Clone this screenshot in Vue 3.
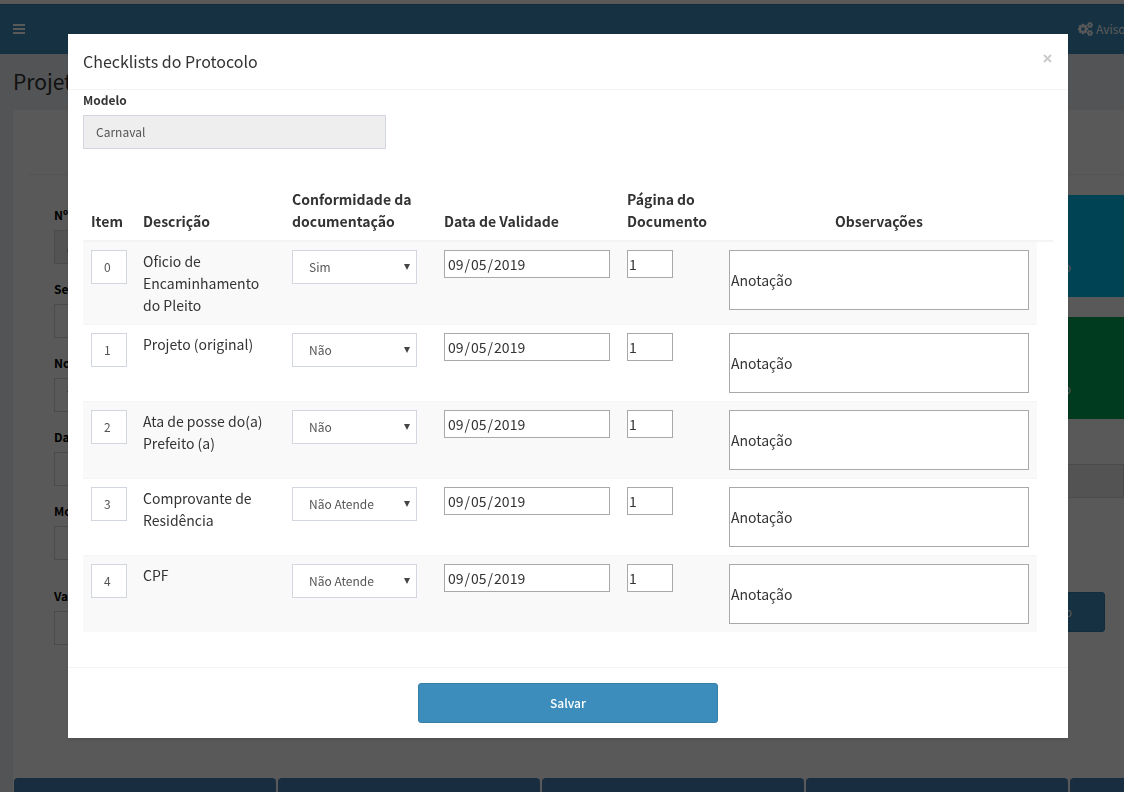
<script setup>
import { reactive } from 'vue'

const sideFields = [
  { id: 'numero', label: 'Nº', value: 'A', disabled: true },
  { id: 'setor', label: 'Se', value: '' },
  { id: 'nome', label: 'No', value: 'T' },
  { id: 'data', label: 'Da', value: '' },
  { id: 'modalidade', label: 'Mo', value: '' },
  { id: 'valor', label: 'Va', value: '', spaced: true },
]

const options = ['Sim', 'Não', 'Não Atende']

const rows = reactive([
  { item: '0', text: 'Oficio de Encaminhamento do Pleito', status: 'Sim', date: '2019-09-05', page: '1', note: 'Anotação' },
  { item: '1', text: 'Projeto (original)', status: 'Não', date: '2019-09-05', page: '1', note: 'Anotação' },
  { item: '2', text: 'Ata de posse do(a) Prefeito (a)', status: 'Não', date: '2019-09-05', page: '1', note: 'Anotação' },
  { item: '3', text: 'Comprovante de Residência', status: 'Não Atende', date: '2019-09-05', page: '1', note: 'Anotação' },
  { item: '4', text: 'CPF', status: 'Não Atende', date: '2019-09-05', page: '1', note: 'Anotação' },
])
</script>

<template>
  <div class="page">
    <header class="topbar">
      <button class="menu" type="button" aria-label="Menu">
        <svg width="12" height="10" viewBox="0 0 12 10"><path d="M0 0h12v2H0zM0 4h12v2H0zM0 8h12v2H0z" fill="currentColor" /></svg>
      </button>
      <a class="notices" href="#">
        <svg class="cogs" viewBox="0 0 1920 1792">
          <path fill="currentColor" stroke="currentColor" stroke-width="60" d="M896 896q0-106-75-181t-181-75-181 75-75 181 75 181 181 75 181-75 75-181zm768 512q0-52-38-90t-90-38-90 38-38 90q0 53 37.5 90.5t90.5 37.5 90.5-37.5 37.5-90.5zm0-1024q0-52-38-90t-90-38-90 38-38 90q0 53 37.5 90.5t90.5 37.5 90.5-37.5 37.5-90.5zm-384 421v185q0 10-7 19.5t-16 10.5l-155 24q-11 35-32 76 34 48 90 115 7 11 7 20 0 12-7 19-23 30-82.5 89.5t-78.5 59.5q-11 0-21-7l-115-90q-37 19-77 31-11 108-23 155-7 24-30 24h-186q-11 0-20-7.5t-10-17.5l-23-153q-34-10-75-31l-118 89q-7 7-20 7-11 0-21-8-144-133-144-160 0-9 7-19 10-14 41-53t47-61q-23-44-35-82l-152-24q-10-1-17-9.5t-7-19.5v-185q0-10 7-19.5t16-10.5l155-24q11-35 32-76-34-48-90-115-7-11-7-20 0-12 7-20 22-30 82-89t79-59q11 0 21 7l115 90q34-18 77-32 11-108 23-154 7-24 30-24h186q11 0 20 7.5t10 17.5l23 153q34 10 75 31l118-89q8-7 20-7 11 0 21 8 144 133 144 160 0 8-7 19-12 16-42 54t-45 60q23 48 34 82l152 23q10 2 17 10.5t7 19.5zm640 533v140q0 16-149 31-12 27-30 52 51 113 51 138 0 4-4 7-122 71-124 71-8 0-46-47t-52-68q-20 2-30 2t-30-2q-14 21-52 68t-46 47q-2 0-124-71-4-3-4-7 0-25 51-138-18-25-30-52-149-15-149-31v-140q0-16 149-31 13-29 30-52-51-113-51-138 0-4 4-7 4-2 35-20t59-34 30-16q8 0 46 46.5t52 67.5q20-2 30-2t30 2q51-71 92-112l6-2q4 0 124 70 4 3 4 7 0 25-51 138 17 23 30 52 149 15 149 31zm0-1024v140q0 16-149 31-12 27-30 52 51 113 51 138 0 4-4 7-122 71-124 71-8 0-46-47t-52-68q-20 2-30 2t-30-2q-14 21-52 68t-46 47q-2 0-124-71-4-3-4-7 0-25 51-138-18-25-30-52-149-15-149-31v-140q0-16 149-31 13-29 30-52-51-113-51-138 0-4 4-7 4-2 35-20t59-34 30-16q8 0 46 46.5t52 67.5q20-2 30-2t30 2q51-71 92-112l6-2q4 0 124 70 4 3 4 7 0 25-51 138 17 23 30 52 149 15 149 31z" />
        </svg>
        <span>Aviso</span>
      </a>
    </header>

    <h1 class="page-title">Projet</h1>

    <main class="box">
      <hr class="rule" />
      <div class="columns">
        <div class="fields">
          <div v-for="f in sideFields" :key="f.id" class="field" :class="{ spaced: f.spaced }">
            <label :for="f.id">{{ f.label }}</label>
            <input :id="f.id" class="control" type="text" :value="f.value" :disabled="f.disabled" />
          </div>
        </div>
        <div class="aside">
          <a class="tile cyan" href="#">o</a>
          <a class="tile green" href="#">o</a>
          <input class="control total" type="text" disabled aria-label="Total" />
          <button class="action" type="button">o</button>
        </div>
      </div>
      <div class="tabs">
        <span v-for="n in 5" :key="n" class="tab"></span>
      </div>
    </main>
  </div>

  <div class="backdrop">
    <section class="modal" role="dialog" aria-labelledby="modal-title">
      <div class="modal-header">
        <h2 id="modal-title">Checklists do Protocolo</h2>
        <button class="close" type="button" aria-label="Fechar">
          <svg width="9" height="9" viewBox="0 0 9 9"><path d="M1 1l7 7M8 1l-7 7" stroke="currentColor" stroke-width="2" /></svg>
        </button>
      </div>
      <div class="modal-body">
        <div class="model">
          <label for="modelo">Modelo</label>
          <input id="modelo" class="control" type="text" value="Carnaval" disabled />
        </div>
        <table>
          <colgroup>
            <col class="c-item" /><col class="c-desc" /><col class="c-conf" /><col class="c-date" /><col class="c-page" /><col /><col class="c-end" />
          </colgroup>
          <thead>
            <tr>
              <th>Item</th>
              <th>Descrição</th>
              <th>Conformidade da documentação</th>
              <th>Data de Validade</th>
              <th>Página do Documento</th>
              <th class="center">Observações</th>
              <th></th>
            </tr>
          </thead>
          <tbody>
            <tr v-for="r in rows" :key="r.item">
              <td><input v-model="r.item" class="control" type="text" aria-label="Item" /></td>
              <td>{{ r.text }}</td>
              <td>
                <div class="select">
                  <select v-model="r.status" class="control" aria-label="Conformidade da documentação">
                    <option v-for="o in options" :key="o">{{ o }}</option>
                  </select>
                  <svg class="arrow" width="6" height="6" viewBox="0 0 6 6"><path d="M0 0h6L3 6z" fill="#444" /></svg>
                </div>
              </td>
              <td><input v-model="r.date" class="plain date" type="date" aria-label="Data de Validade" /></td>
              <td><input v-model="r.page" class="plain page-no" type="text" aria-label="Página do Documento" /></td>
              <td><input v-model="r.note" class="plain note" type="text" aria-label="Observações" /></td>
            </tr>
          </tbody>
        </table>
      </div>
      <div class="modal-footer">
        <button class="save" type="button">Salvar</button>
      </div>
    </section>
  </div>
</template>

<style>
body {
  margin: 0;
  font-family: "Noto Sans CJK SC", "Noto Sans", sans-serif;
  color: #333;
}
</style>

<style scoped>
*, *::before, *::after { box-sizing: border-box; }
input, button, select { font-family: inherit; margin: 0; border-radius: 0; }
h1, h2 { margin: 0; font-weight: 400; }
a { text-decoration: none; }
label { display: block; font-size: 12px; line-height: 20px; font-weight: 700; margin-bottom: 5px; }

.page {
  height: 100vh;
  overflow: hidden;
  display: flex;
  flex-direction: column;
  background: #ecf0f5;
}
.topbar {
  flex: none;
  height: 54px;
  border-top: 4px solid #fff;
  background: #3c8dbc;
  box-shadow: inset 0 1px #367fa9;
  color: #fff;
  display: flex;
  justify-content: space-between;
  align-items: center;
  overflow: hidden;
}
.menu { border: 0; background: none; color: inherit; padding: 0 13px; display: flex; }
.notices {
  color: #fff;
  display: flex;
  align-items: center;
  gap: 3px;
  width: 46px;
  font-size: 12px;
  line-height: 20px;
}
.cogs { width: 15px; height: 14px; flex: none; }
.page-title { flex: none; font-size: 21px; line-height: 26px; padding: 14px 13px 16px; }
.box {
  flex: 1 0 auto;
  margin-left: 13px;
  background: #fff;
  border-radius: 3px 0 0;
  padding-top: 64px;
  color: #000;
}
.rule { border: 0; border-top: 1px solid #eee; margin: 0 0 0 16px; }
.columns { display: grid; grid-template-columns: 1fr 250px; gap: 100px; }
.fields { padding: 30px 0 0 41px; }
.field { margin-bottom: 15px; }
.field.spaced { padding-top: 11px; }
.aside { display: flex; flex-direction: column; padding-top: 20px; }
.tile {
  height: 102px;
  margin-bottom: 20px;
  padding: 62px 53px 0 0;
  text-align: right;
  font-size: 12px;
  line-height: 20px;
  color: #fff;
}
.cyan { background: #00c0ef; }
.green { background: #00a65a; margin-bottom: 45px; }
.total { margin: 0 19px 94px 0; width: auto; }
.action {
  height: 40px;
  margin-right: 19px;
  padding: 0 32px 2px;
  text-align: right;
  background: #3c8dbc;
  border: 1px solid #367fa9;
  border-radius: 3px;
  color: #fff;
  font-size: 12px;
}
.tabs {
  display: grid;
  grid-auto-flow: column;
  grid-auto-columns: 262px;
  gap: 2px;
  overflow: hidden;
  margin-top: 118px;
  padding-left: 1px;
}
.tab { height: 50px; background: #4682b4; border-radius: 4px 4px 0 0; }

.control {
  display: block;
  width: 100%;
  height: 34px;
  border: 1px solid #d2d6de;
  background: #fff;
  padding: 0 12px 2px;
  font-size: 12px;
  color: #555;
}
.control:disabled { background: #eee; }

.backdrop {
  position: fixed;
  inset: 0;
  background: rgba(0, 0, 0, 0.65);
  padding: 34px 56px 34px 68px;
  overflow: hidden;
}
.modal { background: #fff; box-shadow: 0 2px 3px rgba(0, 0, 0, 0.125); }
.modal-header {
  display: flex;
  justify-content: space-between;
  align-items: flex-start;
  padding: 15px;
  border-bottom: 1px solid #f4f4f4;
}
.modal-header h2 { font-size: 16px; line-height: 25px; }
.close { border: 0; background: none; padding: 5px 1px; color: #ccc; display: flex; }
.modal-body { padding: 0 15px 35px; }
.model { width: 303px; margin-bottom: 31px; }

table {
  width: 100%;
  table-layout: fixed;
  border-collapse: separate;
  border-spacing: 0;
  font-size: 14px;
  line-height: 22px;
}
.c-item { width: 52px; }
.c-desc { width: 149px; }
.c-conf { width: 152px; }
.c-date { width: 183px; }
.c-page { width: 102px; }
.c-end { width: 16px; }
th { padding: 8px; text-align: left; vertical-align: bottom; font-weight: 700; border-bottom: 2px solid #f4f4f4; }
th.center { text-align: center; }
td { padding: 8px; vertical-align: top; border-top: 1px solid #f4f4f4; }
tbody tr:first-child td { border-top: 0; }
tbody tr:nth-child(odd) td { background: #f9f9f9; }

.select { position: relative; width: 125px; }
.select select { appearance: none; padding: 0 16px 2px; }
.arrow { position: absolute; right: 7px; top: 14px; pointer-events: none; }
.plain {
  display: block;
  border: 1px solid #a9a9a9;
  background: #fff;
  height: 28px;
  padding: 0 1px;
  font-size: 14px;
  color: #333;
}
.date { width: 166px; padding: 0 2px; }
.date::-webkit-calendar-picker-indicator { display: none; }
.page-no { width: 46px; }
.note { width: 100%; height: 60px; }

.modal-footer { border-top: 1px solid #f4f4f4; padding: 15px; text-align: center; }
.save {
  display: block;
  width: 300px;
  height: 40px;
  margin: 0 auto;
  padding: 0 12px 2px;
  background: #3c8dbc;
  border: 1px solid #367fa9;
  border-radius: 3px;
  color: #fff;
  font-size: 12px;
  font-weight: 500;
}
</style>
